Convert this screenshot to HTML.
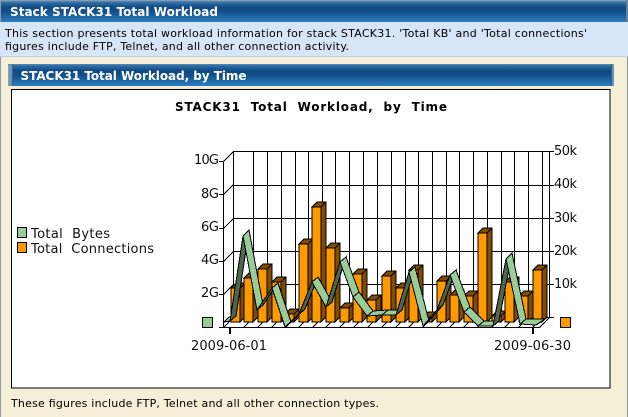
<!DOCTYPE html>
<html><head><meta charset="utf-8"><style>
html,body{margin:0;padding:0;background:#f5efd8;width:628px;height:417px;overflow:hidden}
svg{display:block}
text{font-family:"DejaVu Sans","Liberation Sans",sans-serif;fill:#000;white-space:pre}
.t{font-weight:bold;fill:#fff;font-size:12px}
.d{font-size:11px}
.c{font-size:13px;fill:#111}
.g{stroke:#000;stroke-width:1;fill:none}
.b{fill:#804d00;stroke:#000;stroke-width:1}
.f{fill:#f90;stroke:#000;stroke-width:1}
.l{fill:#9c9;stroke:#000;stroke-width:1}
.k{fill:#4d664d;stroke:#000;stroke-width:1}
.cr{shape-rendering:crispEdges}
</style></head><body>
<svg width="628" height="417" viewBox="0 0 628 417" xmlns="http://www.w3.org/2000/svg">
<defs>
<linearGradient id="h" x1="0" y1="0" x2="0" y2="1">
<stop offset="0" stop-color="#5b8db8"/><stop offset=".09" stop-color="#2a6ca3"/><stop offset=".3" stop-color="#114a83"/><stop offset=".5" stop-color="#134f8b"/><stop offset="1" stop-color="#2c7ebf"/>
</linearGradient>
</defs>
<rect width="628" height="417" fill="#f5efd8"/>
<rect x="0" y="0" width="1" height="417" fill="#8f9aa8"/>
<rect x="627" y="0" width="1" height="417" fill="#8f9aa8"/>
<rect x="0" y="22" width="628" height="34" fill="#d6e6f7"/>
<rect x="0" y="56" width="628" height="1" fill="#b7d2ec"/>
<rect x="1" y="1" width="625" height="21" fill="url(#h)"/>
<rect x="0" y="0" width="628" height="1" fill="#8f9aa8"/>
<rect x="626" y="0" width="2" height="22" fill="#6f7f90"/>
<text class="t" x="10" y="16" textLength="208" lengthAdjust="spacing">Stack STACK31 Total Workload</text>
<text class="d" x="5" y="37" textLength="582" lengthAdjust="spacing">This section presents total workload information for stack STACK31. 'Total KB' and 'Total connections'</text>
<text class="d" x="5" y="50" textLength="344" lengthAdjust="spacing">figures include FTP, Telnet, and all other connection activity.</text>

<rect x="8" y="64" width="606" height="22" fill="url(#h)"/>
<rect x="8" y="65" width="1" height="21" fill="#8fa3b8"/>
<rect x="9" y="64" width="3" height="22" fill="#6a93b8"/>
<rect x="12" y="64" width="1" height="22" fill="#3c5f80"/>
<rect x="611" y="64" width="1" height="22" fill="#3c5f80"/>
<rect x="612" y="64" width="2" height="22" fill="#5f93c0"/>
<text class="t" x="20.5" y="80" textLength="226" lengthAdjust="spacing">STACK31 Total Workload, by Time</text>

<rect class="cr" x="11.5" y="89.5" width="598.5" height="298.5" fill="#fff" stroke="#000"/>
<text x="175" y="111" font-size="12" font-weight="bold" textLength="272" lengthAdjust="spacing">STACK31  Total  Workload,  by  Time</text>

<rect class="l cr" x="17.5" y="227.5" width="9" height="10"/>
<rect class="f cr" x="17.5" y="242.5" width="9" height="10"/>
<text class="c" x="31" y="238" textLength="79" lengthAdjust="spacing">Total  Bytes</text>
<text class="c" x="31" y="253" textLength="123" lengthAdjust="spacing">Total  Connections</text>

<text class="c" x="194" y="164" textLength="25" lengthAdjust="spacing">10G</text>
<text class="c" x="201" y="198" textLength="18" lengthAdjust="spacing">8G</text>
<text class="c" x="201" y="231" textLength="18" lengthAdjust="spacing">6G</text>
<text class="c" x="201" y="264" textLength="18" lengthAdjust="spacing">4G</text>
<text class="c" x="201" y="297" textLength="18" lengthAdjust="spacing">2G</text>
<text class="c" x="554" y="155" textLength="23" lengthAdjust="spacing">50k</text>
<text class="c" x="554" y="188" textLength="23" lengthAdjust="spacing">40k</text>
<text class="c" x="554" y="222" textLength="23" lengthAdjust="spacing">30k</text>
<text class="c" x="554" y="255" textLength="23" lengthAdjust="spacing">20k</text>
<text class="c" x="554" y="288" textLength="23" lengthAdjust="spacing">10k</text>
<text class="c" x="191" y="350" textLength="76" lengthAdjust="spacing">2009-06-01</text>
<text class="c" x="494" y="350" textLength="77" lengthAdjust="spacing">2009-06-30</text>

<!-- back wall grid -->
<path class="g cr" d="M233.5 151.5H550M233.5 185.5H550M233.5 218.5H550M233.5 251.5H550M233.5 284.5H550M233.5 317.5H550
M233.5 151V318M253.5 151V318M267.5 151V318M281.5 151V318M295.5 151V318M308.5 151V318M322.5 151V318M335.5 151V318M349.5 151V318M363.5 151V318M377.5 151V318M391.5 151V318M405.5 151V318M418.5 151V318M432.5 151V318M446.5 151V318M459.5 151V318M473.5 151V318M487.5 151V318M501.5 151V318M514.5 151V318M528.5 151V318M542.5 151V318
M549.5 151V318M550 151.5h4M550 185.5h4M550 218.5h4M550 251.5h4M550 284.5h4M550 317.5h4
M223.5 161V328M219 161.5h5M219 194.5h5M219 228.5h5M219 261.5h5M219 294.5h5M219 327.5H540"/>
<rect x="229" y="328" width="2" height="6" fill="#000"/>
<rect x="532" y="328" width="2" height="6" fill="#000"/>
<path class="g cr" d="M223.5 161.5l10-10M223.5 194.5l10-10M223.5 228.5l10-10M223.5 261.5l10-10M223.5 294.5l10-10M223.5 327.5l10-10
M243.5 327.5l10-10M257.5 327.5l10-10M271.5 327.5l10-10M285.5 327.5l10-10M298.5 327.5l10-10M312.5 327.5l10-10M325.5 327.5l10-10M339.5 327.5l10-10M353.5 327.5l10-10M367.5 327.5l10-10M381.5 327.5l10-10M395.5 327.5l10-10M408.5 327.5l10-10M422.5 327.5l10-10M436.5 327.5l10-10M449.5 327.5l10-10M463.5 327.5l10-10M477.5 327.5l10-10M491.5 327.5l10-10M504.5 327.5l10-10M518.5 327.5l10-10M532.5 327.5l10-10M539.5 327.5l10-10"/>

<!-- bars -->
<g class="cr">
<path class="b" d="M231 288l5-5h9V317l-5 5V288zm9 0l5-5"/><rect class="f" x="231" y="288" width="9" height="34"/>
<path class="b" d="M244 278l5-5h9V317l-5 5V278zm9 0l5-5"/><rect class="f" x="244" y="278" width="9" height="44"/>
<path class="b" d="M258 269l5-5h9V317l-5 5V269zm9 0l5-5"/><rect class="f" x="258" y="269" width="9" height="53"/>
<path class="b" d="M272 282l5-5h9V317l-5 5V282zm9 0l5-5"/><rect class="f" x="272" y="282" width="9" height="40"/>
<path class="b" d="M285 314l5-5h9V317l-5 5V314zm9 0l5-5"/><rect class="f" x="285" y="314" width="9" height="8"/>
<path class="b" d="M299 244l5-5h9V317l-5 5V244zm9 0l5-5"/><rect class="f" x="299" y="244" width="9" height="78"/>
<path class="b" d="M312 207l5-5h9V317l-5 5V207zm9 0l5-5"/><rect class="f" x="312" y="207" width="9" height="115"/>
<path class="b" d="M326 248l5-5h9V317l-5 5V248zm9 0l5-5"/><rect class="f" x="326" y="248" width="9" height="74"/>
<path class="b" d="M340 308l5-5h9V317l-5 5V308zm9 0l5-5"/><rect class="f" x="340" y="308" width="9" height="14"/>
<path class="b" d="M353 274l5-5h9V317l-5 5V274zm9 0l5-5"/><rect class="f" x="353" y="274" width="9" height="48"/>
<path class="b" d="M367 300l5-5h9V317l-5 5V300zm9 0l5-5"/><rect class="f" x="367" y="300" width="9" height="22"/>
<path class="b" d="M382 276l5-5h9V317l-5 5V276zm9 0l5-5"/><rect class="f" x="382" y="276" width="9" height="46"/>
<path class="b" d="M396 288l5-5h9V317l-5 5V288zm9 0l5-5"/><rect class="f" x="396" y="288" width="9" height="34"/>
<path class="b" d="M409 270l5-5h9V317l-5 5V270zm9 0l5-5"/><rect class="f" x="409" y="270" width="9" height="52"/>
<path class="b" d="M423 317l5-5h9V317l-5 5V317zm9 0l5-5"/><rect class="f" x="423" y="317" width="9" height="5"/>
<path class="b" d="M437 281l5-5h9V317l-5 5V281zm9 0l5-5"/><rect class="f" x="437" y="281" width="9" height="41"/>
<path class="b" d="M450 295l5-5h9V317l-5 5V295zm9 0l5-5"/><rect class="f" x="450" y="295" width="9" height="27"/>
<path class="b" d="M464 296l5-5h9V317l-5 5V296zm9 0l5-5"/><rect class="f" x="464" y="296" width="9" height="26"/>
<path class="b" d="M478 233l5-5h9V317l-5 5V233zm9 0l5-5"/><rect class="f" x="478" y="233" width="9" height="89"/>
<path class="b" d="M492 316l5-5h9V317l-5 5V316zm9 0l5-5"/><rect class="f" x="492" y="316" width="9" height="6"/>
<path class="b" d="M505 282l5-5h9V317l-5 5V282zm9 0l5-5"/><rect class="f" x="505" y="282" width="9" height="40"/>
<path class="b" d="M519 296l5-5h9V317l-5 5V296zm9 0l5-5"/><rect class="f" x="519" y="296" width="9" height="26"/>
<path class="b" d="M533 270l5-5h9V317l-5 5V270zm9 0l5-5"/><rect class="f" x="533" y="270" width="9" height="52"/>
</g>

<!-- ribbon -->
<g class="cr">
<polygon class="l" points="224,322 230,321 236,316 229,317"/>
<polygon class="k" points="230,321 243,236 249,230 236,316"/>
<polygon class="l" points="243,236 257,310 263,305 249,230"/>
<polygon class="k" points="257,310 272,288 278,283 263,305"/>
<polygon class="l" points="272,288 285,327 291,322 278,283"/>
<polygon class="l" points="285,327 299,314 305,309 291,322"/>
<polygon class="k" points="299,314 312,282 318,277 305,309"/>
<polygon class="l" points="312,282 326,307 332,302 318,277"/>
<polygon class="k" points="326,307 340,262 346,257 332,302"/>
<polygon class="l" points="340,262 353,297 359,292 346,257"/>
<polygon class="l" points="353,297 367,316 373,311 359,292"/>
<polygon class="l" points="367,316 382,315 388,310 373,311"/>
<polygon class="l" points="382,315 396,315 402,310 388,310"/>
<polygon class="k" points="396,315 409,272 415,267 402,310"/>
<polygon class="l" points="409,272 423,326 429,321 415,267"/>
<polygon class="k" points="423,326 437,310 443,305 429,321"/>
<polygon class="k" points="437,310 450,275 456,270 443,305"/>
<polygon class="l" points="450,275 464,312 470,307 456,270"/>
<polygon class="l" points="464,312 478,326 484,321 470,307"/>
<polygon class="l" points="478,326 493,326 499,321 484,321"/>
<polygon class="k" points="493,326 506,259 512,253 499,321"/>
<polygon class="l" points="506,259 520,324 526,319 512,253"/>
<polygon class="l" points="520,324 536,325 545,319 526,319"/>
</g>

<rect class="l cr" x="202.5" y="317.5" width="10" height="10"/>
<rect class="f cr" x="560.5" y="317.5" width="10" height="10"/>

<text class="d" x="11" y="407" textLength="368" lengthAdjust="spacing">These figures include FTP, Telnet and all other connection types.</text>
</svg>
</body></html>
